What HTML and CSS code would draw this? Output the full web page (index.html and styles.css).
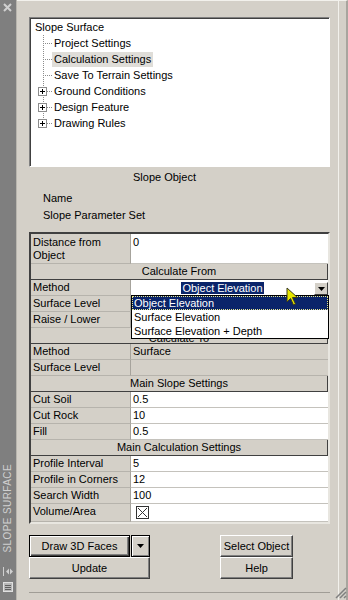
FILE: index.html
```html
<!DOCTYPE html>
<html lang="en">
<head>
    <meta charset="UTF-8">
    <meta name="viewport" content="width=device-width, initial-scale=1.0">
    <title>Slope Surface</title>
    <link rel="stylesheet" href="styles.css">
</head>
<body>
    <div class="palette">
        <div class="strip">
            <svg class="close" width="9" height="9" viewBox="0 0 9 9">
                <path d="M1 1 L8 8 M8 1 L1 8" stroke="#d0d0d0" stroke-width="2"/>
            </svg>
            <div class="strip-title">SLOPE SURFACE</div>
            <svg class="strip-icon" width="12" height="9" viewBox="0 0 12 9">
                <path d="M1.5 0 V9" stroke="#d0d0d0"/>
                <path d="M4 4.5 L7 1.5 V7.5 Z M11 4.5 L8 1.5 V7.5 Z" fill="#d0d0d0"/>
            </svg>
            <svg class="strip-icon list" width="10" height="10" viewBox="0 0 10 10">
                <rect x="0.5" y="0.5" width="9" height="9" fill="#b8b8b8" stroke="#e0e0e0"/>
                <path d="M2 3.5 H8 M2 5.5 H8 M2 7.5 H8" stroke="#606060"/>
            </svg>
        </div>

        <div class="content">
            <div class="tree">
                <div class="node root">Slope Surface</div>
                <div class="node"><span class="joint"></span><span class="label">Project Settings</span></div>
                <div class="node"><span class="joint"></span><span class="label selected">Calculation Settings</span></div>
                <div class="node"><span class="joint"></span><span class="label">Save To Terrain Settings</span></div>
                <div class="node">
                    <span class="joint"><svg class="plus" width="9" height="9" viewBox="0 0 9 9"><rect x="0.5" y="0.5" width="8" height="8" fill="#fff" stroke="#8c8c8c"/><path d="M2 4.5 H7 M4.5 2 V7" stroke="#000"/></svg></span>
                    <span class="label">Ground Conditions</span>
                </div>
                <div class="node">
                    <span class="joint"><svg class="plus" width="9" height="9" viewBox="0 0 9 9"><rect x="0.5" y="0.5" width="8" height="8" fill="#fff" stroke="#8c8c8c"/><path d="M2 4.5 H7 M4.5 2 V7" stroke="#000"/></svg></span>
                    <span class="label">Design Feature</span>
                </div>
                <div class="node last">
                    <span class="joint"><svg class="plus" width="9" height="9" viewBox="0 0 9 9"><rect x="0.5" y="0.5" width="8" height="8" fill="#fff" stroke="#8c8c8c"/><path d="M2 4.5 H7 M4.5 2 V7" stroke="#000"/></svg></span>
                    <span class="label">Drawing Rules</span>
                </div>
            </div>

            <div class="object-title">Slope Object</div>
            <div class="info">Name</div>
            <div class="info">Slope Parameter Set</div>

            <div class="grid">
                <div class="row tall"><div class="key">Distance from<br>Object</div><div class="val">0</div></div>
                <div class="section">Calculate From</div>
                <div class="row">
                    <div class="key">Method</div>
                    <div class="val combo">
                        <span class="combo-text"><span class="picked">Object Elevation</span></span>
                        <span class="combo-btn"><svg width="7" height="4" viewBox="0 0 7 4"><path d="M0 0 H7 L3.5 4 Z" fill="#000"/></svg></span>
                        <div class="dropdown">
                            <div class="option active">Object Elevation</div>
                            <div class="option">Surface Elevation</div>
                            <div class="option">Surface Elevation + Depth</div>
                        </div>
                    </div>
                </div>
                <div class="row"><div class="key">Surface Level</div><div class="val"></div></div>
                <div class="row"><div class="key">Raise / Lower</div><div class="val"></div></div>
                <div class="section hidden-under">Calculate To</div>
                <div class="row"><div class="key">Method</div><div class="val off">Surface</div></div>
                <div class="row"><div class="key">Surface Level</div><div class="val off"></div></div>
                <div class="section">Main Slope Settings</div>
                <div class="row"><div class="key">Cut Soil</div><div class="val">0.5</div></div>
                <div class="row"><div class="key">Cut Rock</div><div class="val">10</div></div>
                <div class="row"><div class="key">Fill</div><div class="val">0.5</div></div>
                <div class="section">Main Calculation Settings</div>
                <div class="row"><div class="key">Profile Interval</div><div class="val">5</div></div>
                <div class="row"><div class="key">Profile in Corners</div><div class="val">12</div></div>
                <div class="row"><div class="key">Search Width</div><div class="val">100</div></div>
                <div class="row check-row">
                    <div class="key">Volume/Area</div>
                    <div class="val">
                        <svg class="check" width="13" height="13" viewBox="0 0 13 13">
                            <rect x="0.5" y="0.5" width="12" height="12" fill="#fff" stroke="#333"/>
                            <path d="M2 2 L11 11 M11 2 L2 11" stroke="#333"/>
                        </svg>
                    </div>
                </div>
            </div>

            <div class="actions">
                <div class="btn-group">
                    <div class="split">
                        <button class="btn default">Draw 3D Faces</button>
                        <button class="btn arrow"><svg width="7" height="4" viewBox="0 0 7 4"><path d="M0 0 H7 L3.5 4 Z" fill="#000"/></svg></button>
                    </div>
                    <button class="btn wide">Update</button>
                </div>
                <div class="btn-group right">
                    <button class="btn">Select Object</button>
                    <button class="btn">Help</button>
                </div>
            </div>

            <div class="footer"></div>
        </div>
        <div class="edge"></div>
    </div>

    <!-- mouse pointer over the open list -->
    <svg class="cursor" width="14" height="20" viewBox="0 0 14 20">
        <path d="M1 1 V15 L4.5 11.5 L7.5 18 L9.5 17 L6.5 10.5 H11.5 Z" fill="#e6e600" stroke="#3a3a20" stroke-width="1"/>
    </svg>
    <svg class="grip" width="14" height="14" viewBox="0 0 14 14">
        <path d="M13 3 L3 13 M13 7 L7 13 M13 11 L11 13" stroke="#808080" stroke-width="1.5"/>
    </svg>
</body>
</html>
```

FILE: styles.css
```css
* {
    box-sizing: border-box;
}

body {
    margin: 0;
    position: relative;
    width: 348px;
    height: 600px;
    overflow: hidden;
    background-color: #d4d0c8;
    font-family: "Liberation Sans", Arial, sans-serif;
    font-size: 11px;
    color: #000;
}

.palette {
    display: flex;
    height: 600px;
}

/* barra lateral do palette */
.strip {
    width: 17px;
    background-color: #7f7f7f;
    border-right: 1px solid #b8b5ae;
    display: flex;
    flex-direction: column;
    align-items: center;
}

.close {
    display: block;
    margin-top: 3px;
    margin-left: -1px;
}

.strip-title {
    margin-top: auto;
    writing-mode: vertical-rl;
    transform: rotate(180deg);
    color: #d0d0d0;
    font-size: 10px;
    letter-spacing: 0.4px;
    line-height: 12px;
}

.strip-icon {
    display: block;
    margin-top: 14px;
}

.strip-icon.list {
    margin-top: 6px;
    margin-bottom: 8px;
}

.content {
    width: 322px;
    display: flex;
    flex-direction: column;
    padding: 16px 8px 0 12px;
    border-top: 1px solid #f2f1ec;
    border-right: 1px solid #f2f1ec;
}

.edge {
    flex: 1;
    border-top: 1px solid #f2f1ec;
    border-right: 2px solid #a8a59e;
}

/* árvore */
.tree {
    height: 150px;
    background-color: #fff;
    border: 1px solid;
    border-color: #808080 #fff #fff #808080;
    box-shadow: inset 1px 1px #404040;
    padding-top: 1px;
}

.node {
    display: flex;
    align-items: center;
    height: 16px;
    white-space: nowrap;
}

.node.root {
    padding-left: 5px;
}

.joint {
    width: 14px;
    height: 16px;
    margin-left: 8px;
    background:
        repeating-linear-gradient(to bottom, #8c8c8c 0 1px, transparent 1px 2px) 5px 0 / 1px 100% no-repeat,
        repeating-linear-gradient(to right, #8c8c8c 0 1px, transparent 1px 2px) 5px 8px / 9px 1px no-repeat;
}

.node.last .joint {
    background:
        repeating-linear-gradient(to bottom, #8c8c8c 0 1px, transparent 1px 2px) 5px 0 / 1px 8px no-repeat,
        repeating-linear-gradient(to right, #8c8c8c 0 1px, transparent 1px 2px) 5px 8px / 9px 1px no-repeat;
}

.plus {
    display: block;
    margin-top: 4px;
}

.label {
    padding: 1px 2px;
    line-height: 13px;
}

.label.selected {
    background-color: #dfddd8;
}

.object-title {
    margin-top: 2px;
    line-height: 16px;
    padding-left: 104px;
}

.info {
    line-height: 16px;
    padding-left: 14px;
}

.info + .info {
    margin-top: 1px;
}

.object-title + .info {
    margin-top: 5px;
}

/* grade de propriedades */
.grid {
    margin-top: 9px;
    border: 2px solid;
    border-color: #404040 #e8e6e0 #e8e6e0 #404040;
}

.row {
    display: flex;
    height: 16px;
    line-height: 15px;
}

.row.tall {
    height: 30px;
    line-height: 13px;
}

.row.check-row {
    height: 18px;
}

.key {
    width: 100px;
    padding: 0 2px;
    background-color: #d4d0c8;
    border-right: 1px solid #a6a39c;
    border-bottom: 1px solid #b6b3ac;
    white-space: nowrap;
}

.row.tall .key,
.row.tall .val {
    padding-top: 2px;
}

.val {
    flex: 1;
    padding: 0 2px;
    background-color: #fff;
    border-bottom: 1px solid #c4c2bc;
}

.val.off {
    background-color: #d4d0c8;
    border-bottom-color: #b6b3ac;
}

.section {
    height: 16px;
    line-height: 15px;
    text-align: center;
    background-color: #d4d0c8;
    border-bottom: 1px solid #404040;
    border-right: 1px solid #404040;
}

/* só a base das letras aparece abaixo da lista aberta */
.section.hidden-under {
    line-height: 20px;
    overflow: hidden;
}

.combo {
    position: relative;
    display: flex;
    align-items: flex-start;
    padding: 0;
}

.combo-text {
    flex: 1;
    text-align: center;
    padding-top: 2px;
    line-height: 12px;
}

.picked {
    background-color: #0a246a;
    color: #fff;
    padding: 0 1px;
}

.combo-btn {
    width: 14px;
    height: 13px;
    margin-top: 2px;
    display: flex;
    align-items: center;
    justify-content: center;
    background-color: #d4d0c8;
    border: 1px solid;
    border-color: #fff #404040 #404040 #fff;
}

.dropdown {
    position: absolute;
    top: 15px;
    left: 0;
    right: -1px;
    z-index: 2;
    background-color: #fff;
    border: 1px solid #000;
}

.option {
    height: 14px;
    line-height: 12px;
    padding: 1px 2px;
}

.option.active {
    background-color: #0a246a;
    color: #fff;
    border: 1px dotted #e8e890;
    padding: 0 1px;
}

.check {
    display: block;
    margin: 2px 0 0 3px;
}

/* botões */
.actions {
    display: flex;
    gap: 70px;
    margin-top: 11px;
}

.btn-group {
    display: flex;
    flex-direction: column;
    width: 121px;
}

.btn-group.right {
    width: 73px;
}

.split {
    display: flex;
    gap: 1px;
}

.btn {
    height: 22px;
    padding: 0;
    font-family: inherit;
    font-size: 11px;
    color: #000;
    background-color: #d4d0c8;
    border: 1px solid;
    border-color: #fff #404040 #404040 #fff;
    box-shadow: inset -1px -1px #808080;
    display: flex;
    align-items: center;
    justify-content: center;
}

.btn.default {
    flex: 1;
    border-color: #000;
    box-shadow: inset 1px 1px #fff, inset -1px -1px #404040, inset -2px -2px #808080;
}

.btn.arrow {
    width: 19px;
    border-color: #000;
    box-shadow: inset 1px 1px #fff, inset -1px -1px #808080;
}

.footer {
    margin-top: auto;
    height: 8px;
    border-top: 1px solid #a09d96;
}

.cursor {
    position: absolute;
    left: 286px;
    top: 287px;
    z-index: 5;
}

.grip {
    position: absolute;
    right: 1px;
    bottom: 1px;
}
```
